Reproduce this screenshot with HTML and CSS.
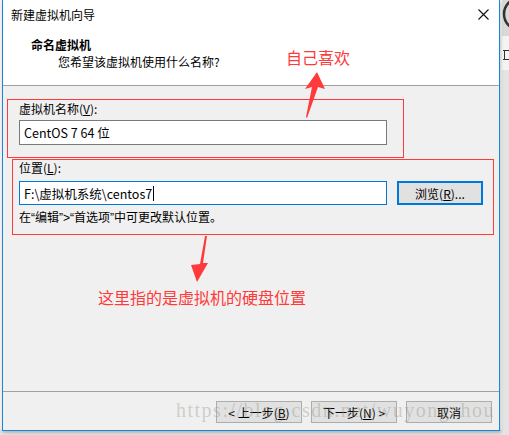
FILE: index.html
```html
<!DOCTYPE html>
<html lang="zh-CN">
<head>
    <meta charset="UTF-8">
    <title>新建虚拟机向导</title>
    <link rel="stylesheet" href="styles.css">
</head>
<body>
    <div class="desktop">
        <div class="window">
            <div class="titlebar">
                <span class="title">新建虚拟机向导</span>
                <svg class="close" width="11" height="11" viewBox="0 0 11 11">
                    <path d="M0.5 0.5 L10.5 10.5 M10.5 0.5 L0.5 10.5" stroke="#111" stroke-width="1.1" fill="none"/>
                </svg>
            </div>
            <div class="header">
                <div class="heading">命名虚拟机</div>
                <div class="subheading">您希望该虚拟机使用什么名称?</div>
            </div>
            <div class="content">
                <div class="group group-name">
                    <div class="field-label">虚拟机名称(<u>V</u>):</div>
                    <div class="field name-field">CentOS 7 64 位</div>
                </div>
                <div class="group group-location">
                    <div class="field-label">位置(<u>L</u>):</div>
                    <div class="path-row">
                        <div class="field path-field">F:\虚拟机系统\centos7<span class="caret"></span></div>
                        <button class="btn btn-browse" type="button">浏览(<u>R</u>)...</button>
                    </div>
                    <div class="hint">在<span class="q">“</span>编辑<span class="q">”&gt;“</span>首选项<span class="q">”</span>中可更改默认位置。</div>
                </div>
            </div>
            <div class="footer">
                <button class="btn" type="button">&lt; 上一步(<u>B</u>)</button>
                <button class="btn" type="button">下一步(<u>N</u>) &gt;</button>
                <button class="btn" type="button">取消</button>
            </div>

            <!-- annotations drawn on top of the screenshot -->
            <div class="note note-name">自己喜欢</div>
            <div class="note note-disk">这里指的是虚拟机的硬盘位置</div>
            <svg class="arrows" width="499" height="431" viewBox="0 0 499 431">
                <polygon points="316,72 324,89 317,87 306,118 305,117 311,87 304,89" fill="#ff3a3a"/>
                <polygon points="204,236 206,236 202,263 207,263 196,282 190,265 199,264" fill="#ff3a3a"/>
            </svg>
            <div class="watermark">https://blog.csdn.net/wuyongzhou</div>
        </div>
        <div class="side">
            <svg width="7" height="70" viewBox="0 0 7 70">
                <rect width="7" height="70" fill="#d9d9d9"/>
                <circle cx="18" cy="14" r="16" fill="none" stroke="#333" stroke-width="2.5"/>
                <rect x="0" y="36" width="7" height="34" fill="#f4f4f4"/>
                <rect x="1" y="50" width="6" height="1" fill="#333"/>
                <rect x="2" y="50" width="1" height="10" fill="#333"/>
                <rect x="1" y="59" width="6" height="1" fill="#333"/>
            </svg>
        </div>
    </div>
</body>
</html>
```

FILE: styles.css
```css
body {
    margin: 0;
    background: #f2f2f2;
    font-family: "Noto Sans CJK SC", "Noto Sans", sans-serif;
    font-size: 12px;
    color: #000;
}
.desktop {
    display: flex;
    height: 435px;
    overflow: hidden;
    background: linear-gradient(#f2f2f2 428px, #dcdcdc 431px, #e6e6e6 435px);
}
.window {
    position: relative;
    margin-left: 2px;
    width: 497px;
    height: 430px;
    border: 1px solid #1a86d9;
    border-top: none;
    background: #f0f0f0;
    display: flex;
    flex-direction: column;
    box-shadow: 1px 2px 3px rgba(0,0,0,0.18);
}
.side {
    margin-left: 2px;
    width: 7px;
    background: #e4e4e4;
}
.titlebar {
    height: 28px;
    background: #fff;
    display: flex;
    align-items: center;
    justify-content: space-between;
    padding: 0 10px 0 8px;
}
.title {
    line-height: 16px;
    margin-top: 2px;
}
.close {
    margin-top: 1px;
}
.header {
    background: #fff;
    height: 58px;
    border-bottom: 1px solid #a0a0a0;
    padding-top: 9px;
    box-sizing: border-box;
    line-height: 16px;
}
.heading {
    font-weight: bold;
    padding-left: 28px;
}
.subheading {
    padding-left: 55px;
    margin-top: 1px;
}
.content {
    flex: 1;
    padding-top: 13px;
}
.group {
    box-sizing: border-box;
    border: 1px solid rgb(255, 58, 58);
}
.group-name {
    margin-left: 4px;
    width: 397px;
    height: 59px;
    padding: 1px 0 0 11px;
}
.group-location {
    margin: 1px 0 0 9px;
    width: 482px;
    height: 76px;
    padding: 0 0 0 6px;
}
.field-label {
    line-height: 16px;
}
.field {
    box-sizing: border-box;
    width: 368px;
    padding: 0 4px;
    font-size: 12.5px;
    background: #fff;
    display: flex;
    align-items: center;
}
.name-field {
    height: 25px;
    margin-top: 3px;
    border: 1px solid #7a7a7a;
}
.path-row {
    display: flex;
    gap: 10px;
    margin-top: 5px;
}
.path-field {
    height: 24px;
    border: 1px solid #0078d7;
}
.caret {
    width: 1px;
    height: 15px;
    margin-left: 1px;
    background: #000;
}
.hint {
    line-height: 16px;
    margin-top: 4px;
}
.q {
    font-family: "Liberation Sans", sans-serif;
}
.btn {
    box-sizing: border-box;
    width: 86px;
    height: 22px;
    padding: 0;
    background: #e1e1e1;
    border: 1px solid #adadad;
    font-family: inherit;
    font-size: 12px;
    color: #000;
}
.btn-browse {
    height: 24px;
    border: 2px solid #0078d7;
}
.footer {
    height: 39px;
    border-top: 1px solid #a0a0a0;
    display: flex;
    justify-content: flex-end;
    align-items: flex-start;
    gap: 9px;
    padding: 9px 7px 0 0;
    box-sizing: border-box;
}
.note {
    position: absolute;
    color: #ff3a3a;
    font-size: 16px;
    line-height: 18px;
}
.note-name {
    left: 283px;
    top: 48px;
}
.note-disk {
    left: 95px;
    top: 288px;
}
.arrows {
    position: absolute;
    left: -2px;
    top: 0;
    pointer-events: none;
}
.watermark {
    position: absolute;
    left: 173px;
    top: 399px;
    font-family: "Liberation Serif", serif;
    font-size: 20px;
    letter-spacing: 1.5px;
    color: rgba(150,150,140,0.4);
    pointer-events: none;
}
```
